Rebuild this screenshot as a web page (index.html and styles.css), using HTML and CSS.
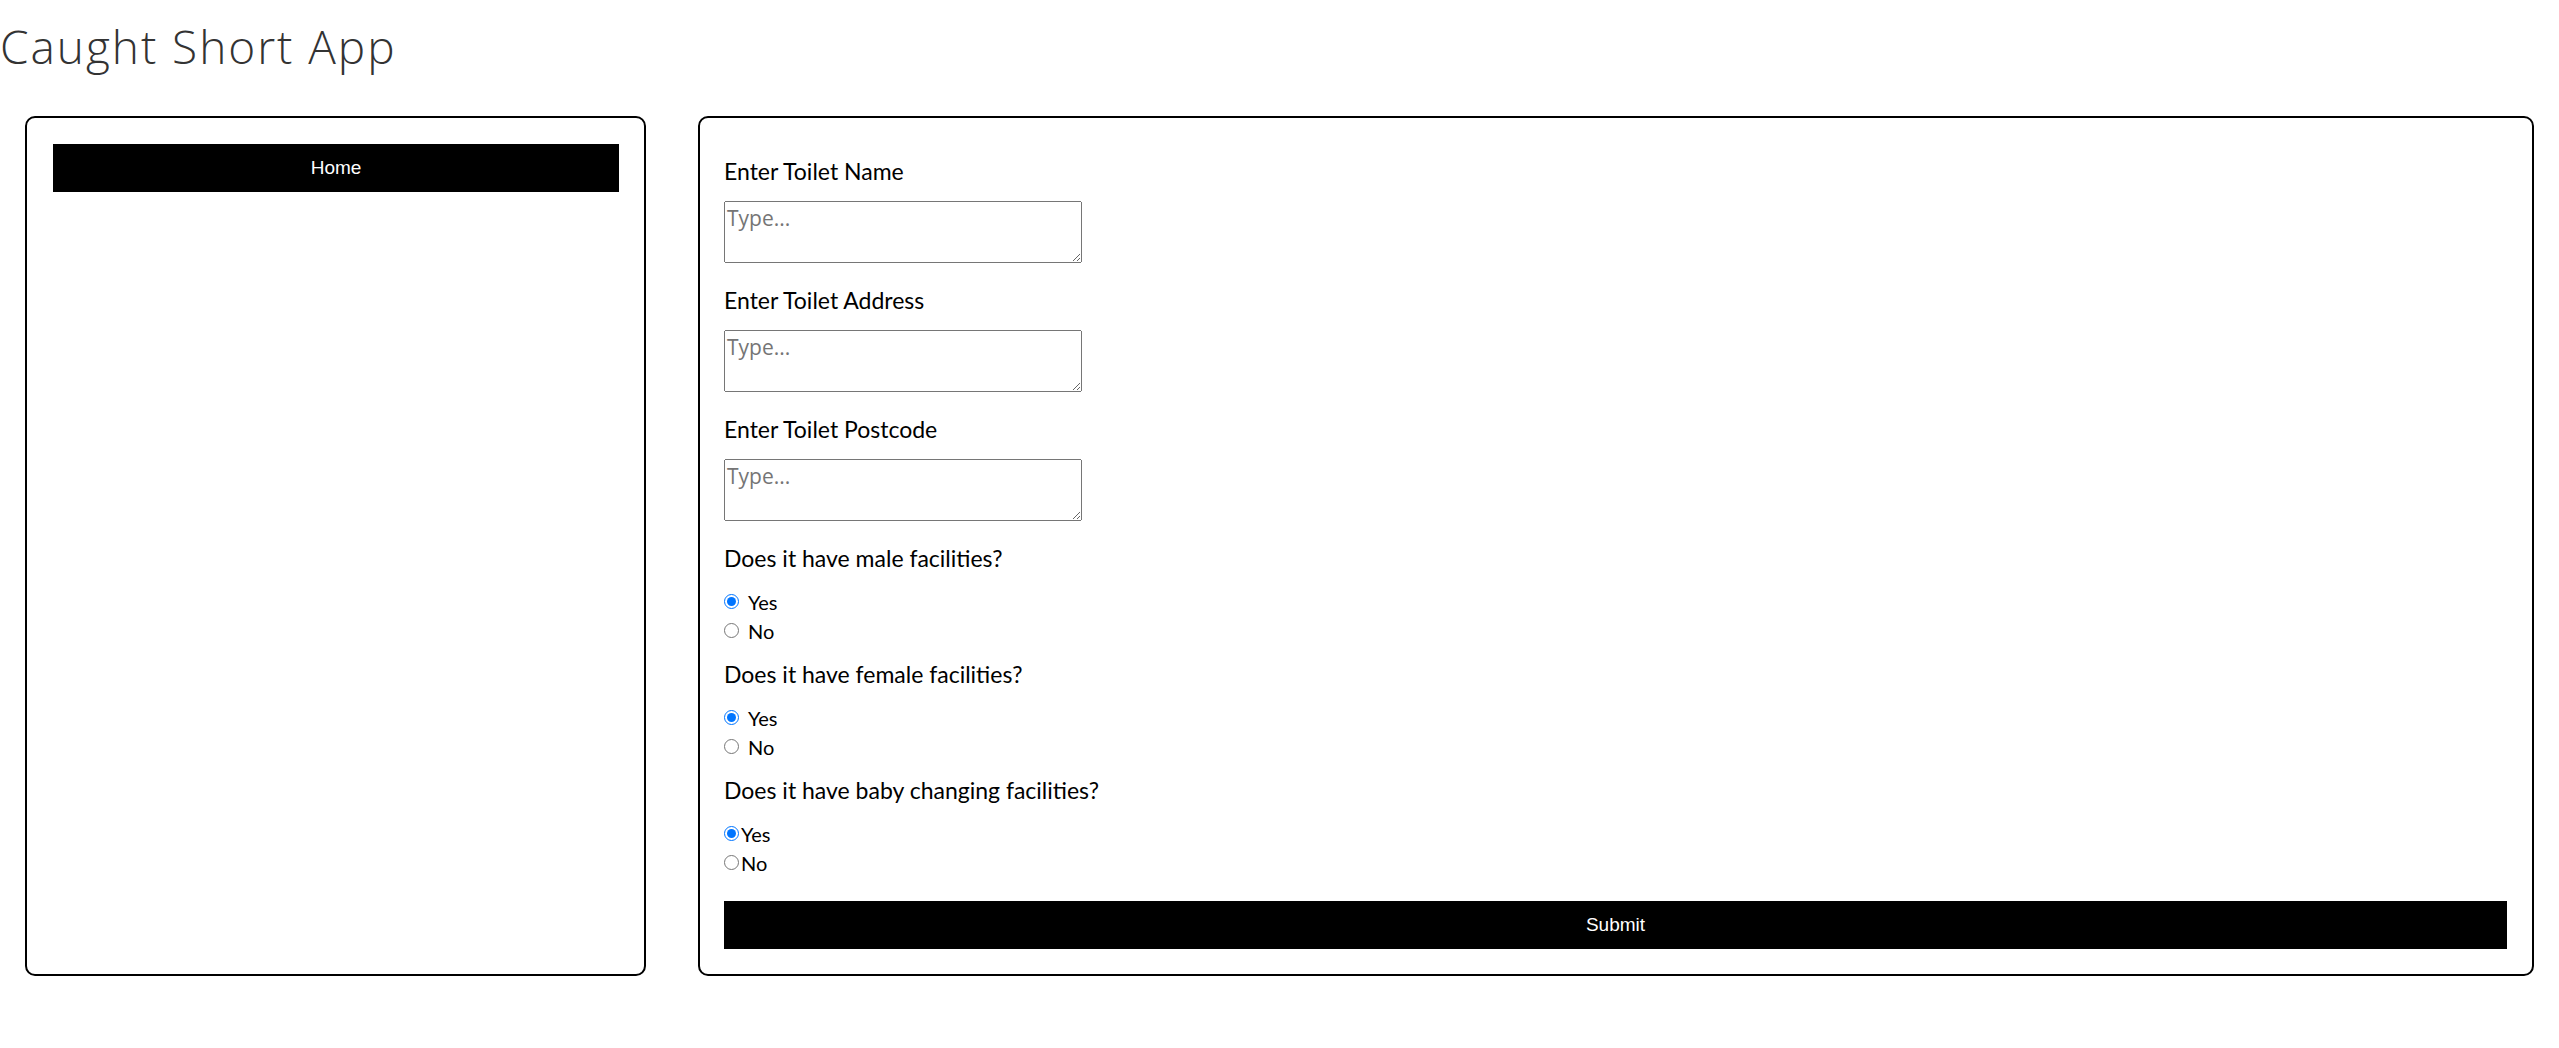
FILE: index.html
```html
<!DOCTYPE html>
<html lang="en">
<head>
<meta charset="utf-8">
<title>Caught Short App</title>
<link rel="stylesheet" href="styles.css">
</head>
<body>
<h1 class="app-title">Caught Short App</h1>
<div class="layout">
  <nav class="sidebar">
    <button class="bar-button" type="button">Home</button>
  </nav>
  <main class="panel">
    <form class="toilet-form">
      <label class="field-label" for="tname">Enter Toilet Name</label>
      <textarea id="tname" class="field-input" placeholder="Type..."></textarea>
      <label class="field-label" for="taddr">Enter Toilet Address</label>
      <textarea id="taddr" class="field-input" placeholder="Type..."></textarea>
      <label class="field-label" for="tpost">Enter Toilet Postcode</label>
      <textarea id="tpost" class="field-input" placeholder="Type..."></textarea>

      <p class="question">Does it have male facilities?</p>
      <div class="radio-group">
        <label class="radio-row"><input type="radio" name="male" checked><span>Yes</span></label>
        <label class="radio-row"><input type="radio" name="male"><span>No</span></label>
      </div>

      <p class="question">Does it have female facilities?</p>
      <div class="radio-group">
        <label class="radio-row"><input type="radio" name="female" checked><span>Yes</span></label>
        <label class="radio-row"><input type="radio" name="female"><span>No</span></label>
      </div>

      <p class="question">Does it have baby changing facilities?</p>
      <div class="radio-group tight">
        <label class="radio-row"><input type="radio" name="baby" checked><span>Yes</span></label>
        <label class="radio-row"><input type="radio" name="baby"><span>No</span></label>
      </div>

      <button class="bar-button submit" type="button">Submit</button>
    </form>
  </main>
</div>
</body>
</html>
```
FILE: styles.css
```css
* { box-sizing: border-box; }

body {
  margin: 0;
  background: #fff;
  color: #000;
  font-family: Lato, "Open Sans", sans-serif;
}

.app-title {
  margin: 19px 0 0 0;
  font-family: "Open Sans", Lato, sans-serif;
  font-weight: 300;
  font-size: 46px;
  line-height: 54px;
  color: #333;
  letter-spacing: 1.95px;
}

.layout {
  display: flex;
  gap: 52px;
  padding: 43px 25px 0 25px;
}

.sidebar {
  width: 621px;
  flex: none;
  border: 2px solid #000;
  border-radius: 10px;
  padding: 26px 25px 26px 26px;
}

.panel {
  flex: 1;
  border: 2px solid #000;
  border-radius: 10px;
  padding: 37px 25px 25px 24px;
}

.bar-button {
  display: block;
  width: 100%;
  height: 48px;
  border: 0;
  border-radius: 0;
  background: #000;
  color: #fff;
  font-family: "Liberation Sans", Arial, sans-serif;
  font-size: 19px;
  padding: 0;
  cursor: pointer;
}

.toilet-form {
  display: flex;
  flex-direction: column;
  align-items: flex-start;
}

.field-label,
.question {
  display: block;
  margin: 0 0 14px 0;
  font-size: 23px;
  line-height: 32px;
}

.question {
  margin-bottom: 13px;
}

.field-input {
  display: block;
  width: 358px;
  height: 62px;
  margin: 0 0 21px 0;
  font-family: "Open Sans", Lato, sans-serif;
  font-size: 21px;
  line-height: 26px;
  padding: 3px 2px 0 2px;
}

.field-input::placeholder {
  color: #757575;
}

.radio-group {
  display: flex;
  flex-direction: column;
  margin-bottom: 13px;
}

.radio-row {
  display: flex;
  align-items: center;
  height: 29px;
  font-size: 20px;
}

.radio-row input {
  width: 15px;
  height: 15px;
  margin: 0 9px 0 0;
}

.tight .radio-row input {
  margin-right: 2px;
}

.submit {
  margin-top: 11px;
  width: 100%;
}
```
